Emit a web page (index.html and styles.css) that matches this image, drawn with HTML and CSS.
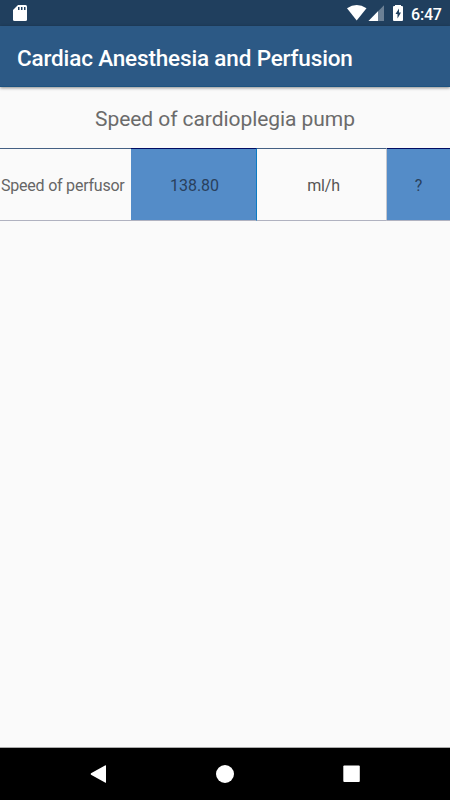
FILE: index.html
```html
<!DOCTYPE html>
<html lang="en">
<head>
    <meta charset="UTF-8">
    <meta name="viewport" content="width=device-width, initial-scale=1.0">
    <title>Cardiac Anesthesia and Perfusion</title>
    <link rel="stylesheet" href="styles.css">
</head>
<body>
    <div class="status-bar">
        <svg class="sd-icon" width="14" height="17" viewBox="0 0 14 17">
            <path d="M5 0h7.500Q14 0 14 1.500v13Q14 16 12.500 16h-11Q0 16 0 14.500V5z" fill="#fff"/>
            <path d="M5 2h1.500v3H5zM8 2h1.500v3H8zM11 2h1.500v3H11z" fill="#203f5e"/>
        </svg>
        <div class="status-right">
            <svg width="94" height="26" viewBox="0 0 94 26" class="signals">
                <path d="M4 8.200Q13.700 1.800 23.500 8.200L13.700 20.500z" fill="#fff"/>
                <path d="M41 5.200V21H25.500z" fill="#6c8095"/>
                <path d="M35 11.200V21H25.500z" fill="#fff"/>
                <path d="M52 6h-1Q50 6 50 7v13q0 1 1 1h8q1 0 1-1V7q0-1-1-1h-1V5h-6z" fill="#fff"/>
                <path d="M56 8.500l-3.500 5.500h2v4.500l3.500-6h-2z" fill="#203f5e"/>
            </svg>
            <span class="clock">6:47</span>
        </div>
    </div>

    <header class="app-bar">
        <h1>Cardiac Anesthesia and Perfusion</h1>
    </header>

    <main class="content">
        <h2>Speed of cardioplegia pump</h2>
        <div class="result-row">
            <div class="cell label">Speed of perfusor</div>
            <div class="cell value">138.80</div>
            <div class="cell unit">ml/h</div>
            <div class="cell help">?</div>
        </div>
    </main>

    <nav class="nav-bar">
        <svg width="18" height="18" viewBox="0 0 18 18"><path d="M16 .5v17Q15.500 18 15 17.500L1 9.700Q.3 9 1 8.300L15 .5Q15.500 0 16 .5z" fill="#fff"/></svg>
        <svg width="18" height="18" viewBox="0 0 18 18"><circle cx="9" cy="9" r="9" fill="#fff"/></svg>
        <svg width="18" height="18" viewBox="0 0 18 18"><rect x="1.300" y=".5" width="16.500" height="16.500" rx="1" fill="#fff"/></svg>
    </nav>
</body>
</html>
```

FILE: styles.css
```css
body {
    font-family: Roboto, sans-serif;
    background-color: #fafafa;
    display: flex;
    flex-direction: column;
    height: 100vh;
    margin: 0;
}

svg {
    display: block;
}

.status-bar {
    display: flex;
    justify-content: space-between;
    height: 26px;
    background-color: #203f5e;
    color: white;
}

.sd-icon {
    margin: 5px 0 0 13px;
}

.status-right {
    display: flex;
    width: 107px;
}

.signals {
    flex: none;
    margin-right: -26px;
}

.clock {
    font-size: 16px;
    font-weight: 500;
    letter-spacing: -0.2px;
    line-height: 29px;
}

.app-bar {
    box-sizing: border-box;
    height: 61px;
    padding-left: 17px;
    background-color: #2c5985;
    border-bottom: 1px solid #1d5380;
    box-shadow: 0 1px 3px rgba(0, 0, 0, 0.45);
}

h1 {
    margin: 0;
    color: white;
    font-size: 22.5px;
    font-weight: 500;
    letter-spacing: -0.16px;
    line-height: 65px;
}

.content {
    flex: 1;
}

h2 {
    margin: 0;
    height: 61px;
    color: #6b6b6b;
    font-size: 21px;
    font-weight: 400;
    letter-spacing: -0.06px;
    line-height: 65px;
    text-align: center;
}

.result-row {
    display: grid;
    grid-template-columns: 131px 126px 130px 63px;
    height: 73px;
    font-size: 16px;
}

.cell {
    box-sizing: border-box;
    padding-top: 2px;
    border-top: 1px solid #445f83;
    border-bottom: 1px solid #b0b2c0;
    color: #666;
    line-height: 69px;
    text-align: center;
}

.label {
    padding-left: 1px;
    letter-spacing: -0.22px;
    text-align: left;
}

.value,
.help {
    background-color: #548cc8;
    border-top-color: #000c62;
    color: #29405c;
}

.value {
    padding-left: 2px;
    border-right: 1px solid #0b7bc4;
}

.unit {
    border-right: 1px solid #c5c7ce;
    padding-left: 4px;
    color: #555;
    letter-spacing: -0.2px;
}

.nav-bar {
    box-sizing: border-box;
    display: flex;
    justify-content: space-between;
    height: 53px;
    padding: 17px 90px 0;
    background-color: black;
    border-top: 1px solid #aaa;
}
```
